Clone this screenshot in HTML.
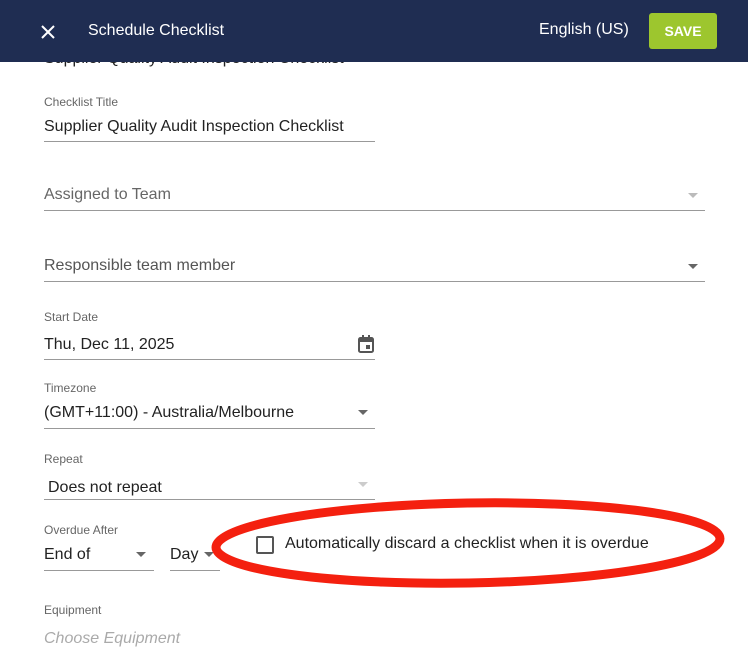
<!DOCTYPE html>
<html><head><meta charset="utf-8"><style>
body{margin:0;width:748px;height:654px;overflow:hidden;background:#fff;font-family:"Liberation Sans",Arial,sans-serif;position:relative;color:#222}
.a{position:absolute;white-space:nowrap}
.lab{font-size:12px;color:#666}
.val{font-size:16px;color:#222}
.line{position:absolute;height:1px;background:#999}
.tri{position:absolute;width:0;height:0;border-left:5px solid transparent;border-right:5px solid transparent;border-top:5px solid #666}
</style></head><body>
<div class="a val" style="left:44px;top:50px">Supplier Quality Audit Inspection Checklist</div>
<div class="a" style="left:0;top:0;width:748px;height:62px;background:#1f2d52"></div>
<svg class="a" style="left:40px;top:24px" width="16" height="16"><path d="M2 2L14 14M14 2L2 14" stroke="#fff" stroke-width="2"/></svg>
<div class="a" style="left:88px;top:22px;color:#fff;font-size:16px">Schedule Checklist</div>
<div class="a" style="left:539px;top:21px;color:#fff;font-size:16px">English (US)</div>
<div class="a" style="left:649px;top:13px;width:68px;height:36px;background:#9dc62e;border-radius:3px;color:#fff;font-weight:bold;font-size:14px;text-align:center;line-height:36px">SAVE</div>

<div class="a lab" style="left:44px;top:95px">Checklist Title</div>
<div class="a val" style="left:44px;top:118px">Supplier Quality Audit Inspection Checklist</div>
<div class="line" style="left:44px;top:141px;width:331px"></div>

<div class="a val" style="left:44px;top:186px;color:#666">Assigned to Team</div>
<div class="tri" style="left:688px;top:193px;border-top-color:#bbb"></div>
<div class="line" style="left:44px;top:210px;width:661px"></div>

<div class="a val" style="left:44px;top:257px;color:#555">Responsible team member</div>
<div class="tri" style="left:688px;top:264px"></div>
<div class="line" style="left:44px;top:281px;width:661px"></div>

<div class="a lab" style="left:44px;top:310px">Start Date</div>
<div class="a val" style="left:44px;top:336px">Thu, Dec 11, 2025</div>
<svg class="a" style="left:357px;top:334px" width="20" height="20"><rect x="2" y="4" width="14" height="14" rx="1.5" fill="none" stroke="#555" stroke-width="2"/><rect x="2" y="4" width="14" height="4" fill="#555"/><rect x="5" y="1" width="2" height="4" fill="#555"/><rect x="11" y="1" width="2" height="4" fill="#555"/><rect x="9" y="11" width="4" height="4" fill="#555"/></svg>
<div class="line" style="left:44px;top:359px;width:331px"></div>

<div class="a lab" style="left:44px;top:381px">Timezone</div>
<div class="a val" style="left:44px;top:404px">(GMT+11:00) - Australia/Melbourne</div>
<div class="tri" style="left:358px;top:410px"></div>
<div class="line" style="left:44px;top:428px;width:331px"></div>

<div class="a lab" style="left:44px;top:452px">Repeat</div>
<div class="a val" style="left:48px;top:479px">Does not repeat</div>
<div class="tri" style="left:358px;top:482px;border-top-color:#ccc"></div>
<div class="line" style="left:44px;top:499px;width:331px"></div>

<div class="a lab" style="left:44px;top:523px">Overdue After</div>
<div class="a val" style="left:44px;top:546px">End of</div>
<div class="tri" style="left:136px;top:552px"></div>
<div class="line" style="left:44px;top:570px;width:110px"></div>
<div class="a val" style="left:170px;top:546px">Day</div>
<div class="tri" style="left:204px;top:552px"></div>
<div class="line" style="left:170px;top:570px;width:50px"></div>

<div class="a" style="left:256px;top:536px;width:14px;height:14px;border:2px solid #555;border-radius:2px"></div>
<div class="a" style="left:285px;top:535px;font-size:16px;color:#222">Automatically discard a checklist when it is overdue</div>
<svg class="a" style="left:0;top:0" width="748" height="654"><ellipse cx="468" cy="543" rx="252" ry="40" fill="none" stroke="#f4200f" stroke-width="9" transform="rotate(-1 468 543)"/></svg>

<div class="a lab" style="left:44px;top:603px">Equipment</div>
<div class="a val" style="left:44px;top:630px;color:#aaa;font-style:italic">Choose Equipment</div>
</body></html>
